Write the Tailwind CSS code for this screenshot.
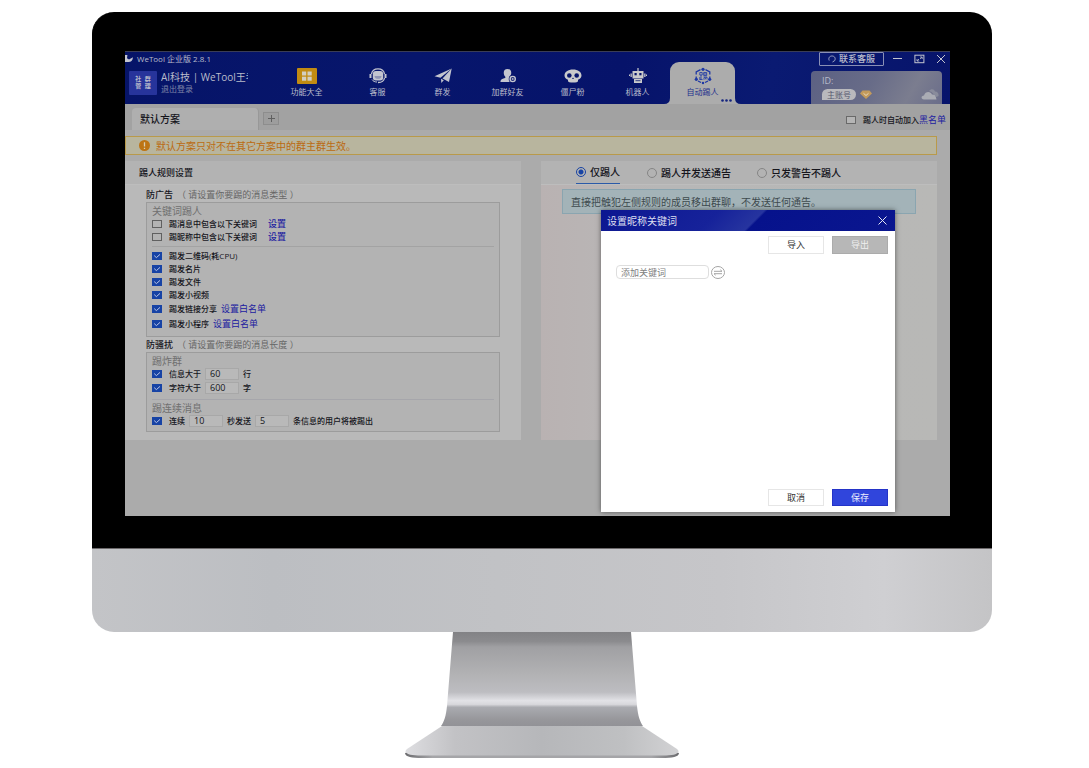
<!DOCTYPE html>
<html lang="zh-CN">
<head>
<meta charset="utf-8">
<meta name="viewport" content="width=device-width, initial-scale=1">
<title>WeTool 企业版</title>
<script src="https://cdn.jsdelivr.net/npm/@tailwindcss/browser@4"></script>
</head>
<body class="bg-white pt-3 pl-[92px] pr-[97px] font-['Open_Sans','Noto_Sans_CJK_SC',sans-serif] text-[8px] leading-3 text-[#15151c]">
<svg class="hidden" aria-hidden="true">
  <symbol id="tick" viewBox="0 0 10 8"><path d="M2.2 3.6 4.4 5.6 8 2.4" fill="none" stroke="#b9c4e6" stroke-width="1"/></symbol>
</svg>

<div class="rounded-t-[22px] bg-black pt-[39px] pr-[42px] pb-8 pl-8 border-l border-black">
  <div class="relative overflow-hidden bg-[#ababab]">

    <header class="flex h-[53px] border-t border-[#3a3d55] bg-[linear-gradient(100deg,#061468_0%,#07166c_35%,#06136a_60%,#0a1a72_78%,#07146b_100%)] text-[#b9bccb]">
      <div class="w-[149px] shrink-0">
        <div class="flex h-[14px] items-center gap-1">
          <svg class="h-2 w-2" viewBox="0 0 8 8"><path d="M0 0h2.4L2 3.2l2 1.3L8 2.2C7.600 5.500 6 7 3.500 7H0Z" fill="#c4c6d2"/></svg>
          <h1>WeTool 企业版 2.8.1</h1>
        </div>
        <div class="mt-[5px] flex gap-1 pl-1">
          <div class="grid h-6 w-7 grid-cols-2 place-content-center justify-items-center gap-x-px rounded-[1px] bg-[#27349b] px-[5px] text-[6px] leading-[7px] font-bold"><span>社</span><span>群</span><span>管</span><span>理</span></div>
          <div>
            <p class="w-[87px] overflow-hidden text-[10px] leading-3 whitespace-nowrap">AI科技 | WeTool王者</p>
            <a href="#" class="block text-[#7f85a8]">退出登录</a>
          </div>
        </div>
      </div>

      <nav class="flex shrink-0 items-end text-center">
        <a href="#" class="mr-[6px] flex h-[42px] w-[65px] flex-col items-center pt-[5px]">
          <svg class="h-[18px] w-5" viewBox="0 0 20 18"><rect y="1" width="20" height="16" rx="1" fill="#c18b12"/><g fill="#d3cfc0"><rect x="5" y="4.500" width="4.200" height="4"/><rect x="10.500" y="4.500" width="4.200" height="4"/><rect x="5" y="9.700" width="4.200" height="4"/><rect x="10.500" y="9.700" width="4.200" height="4"/></g></svg>
          <span class="mt-px">功能大全</span></a>
        <a href="#" class="flex h-[42px] w-[65px] flex-col items-center pt-[5px]">
          <svg class="h-[18px] w-[18px]" viewBox="0 0 18 18" fill="none" stroke="#c3c5cf"><path d="M2.500 7C3 3.500 5.500 1.800 9 1.800S15 3.500 15.500 7" stroke-width="1.300"/><rect x="3.800" y="4" width="10.400" height="9.500" rx="3" fill="#c3c5cf" stroke="none"/><path d="M5.500 9h7c0 3.800-7 3.800-7 0Z" fill="#8f94b4" stroke="none"/><path d="M1.500 7v4M16.500 7v4" stroke-width="2"/><path d="M15.500 11c-.5 3-3 4.500-6.500 4.500" stroke-width="1.300"/><path d="M3 12.500c1 1.800 3 2.500 5 2.500" stroke-width="1"/></svg>
          <span class="mt-px">客服</span></a>
        <a href="#" class="flex h-[42px] w-[65px] flex-col items-center pt-[5px]">
          <svg class="h-[18px] w-[18px]" viewBox="0 0 18 18" fill="#c3c5cf"><path d="M.5 9.200 17.700 1.500 6.500 10.800Z"/><path d="M17.700 1.500 15 15 8.500 11.500Z"/><path d="M7 11.700 9.800 13.200 7.300 16Z"/></svg>
          <span class="mt-px">群发</span></a>
        <a href="#" class="flex h-[42px] w-[65px] flex-col items-center pt-[5px]">
          <svg class="h-[18px] w-[18px]" viewBox="0 0 18 18"><path d="M8.500 2c3 0 4 2 3.700 4.500-.2 1.500-.8 2.500-1.500 3.200v1.500L13 13v2H1.500c0-2.500 1-3 4.800-4V9.700C5.500 9 5 8 4.800 6.500 4.500 4 5.500 2 8.500 2Z" fill="#c3c5cf"/><circle cx="13.700" cy="12" r="4" fill="#07156b"/><circle cx="13.700" cy="12" r="2.600" fill="none" stroke="#c3c5cf" stroke-width="1.400"/><path d="M12.500 12h2.400M13.700 10.800v2.400" stroke="#c3c5cf" stroke-width=".8"/></svg>
          <span class="mt-px">加群好友</span></a>
        <a href="#" class="flex h-[42px] w-[65px] flex-col items-center pt-[5px]">
          <svg class="h-[18px] w-[18px]" viewBox="0 0 18 18"><path d="M9 2.500c5 0 8.500 2.500 8.500 6 0 2-1.200 3.200-3.500 4.200V14c0 1.300-2 1.500-5 1.500S4 15.300 4 14v-1.300C1.700 11.700.5 10.500.5 8.500c0-3.500 3.500-6 8.500-6Z" fill="#c9cacb"/><circle cx="5.300" cy="8.500" r="2.300" fill="#07156b"/><circle cx="12.700" cy="8.500" r="2.300" fill="#07156b"/><path d="M9 10.500 10 12H8Z" fill="#07156b"/></svg>
          <span class="mt-px">僵尸粉</span></a>
        <a href="#" class="flex h-[42px] w-[65px] flex-col items-center pt-[5px]">
          <svg class="h-[18px] w-[18px]" viewBox="0 0 18 18"><path d="M8.400 1h1.200v3H8.400ZM3.500 4h11v7.500h-11ZM1.500 6.500h1.300v3.500H1.500ZM15.200 6.500h1.300v3.500h-1.300ZM0 7.500h1v1.500H0ZM17 7.500h1v1.500h-1ZM5 12h8V16H5Z" fill="#c9cacb"/><rect x="5.500" y="6" width="2.200" height="2.300" fill="#07156b"/><rect x="10.300" y="6" width="2.200" height="2.300" fill="#07156b"/><path d="M6.500 13.700h5" stroke="#07156b" stroke-width=".8"/></svg>
          <span class="mt-px">机器人</span></a>
        <a href="#" aria-current="page" class="relative flex h-[42px] w-[65px] flex-col items-center rounded-t-[9px] bg-[#acacac] pt-[5px] text-[#1c2f8c]">
          <svg class="absolute bottom-0 -left-[6px] h-[6px] w-[6px]" viewBox="0 0 6 6"><path d="M6 0v6H0Q6 6 6 0Z" fill="#acacac"/></svg>
          <svg class="absolute -right-[6px] bottom-0 h-[6px] w-[6px]" viewBox="0 0 6 6"><path d="M0 0v6h6Q0 6 0 0Z" fill="#acacac"/></svg>
          <svg class="h-[18px] w-[18px]" viewBox="0 0 18 18" fill="none" stroke="#1d37a5"><path d="M6.500 2.700 2.200 4.800v2.700M11.500 2.700l4.300 2.100v2.700M4 14l3 1.500M14 14l-3 1.500M2.200 9.500V11M15.800 9.500V11" stroke-width="1.300"/><g fill="#1d37a5" stroke="none"><circle cx="9" cy="2.300" r="1.600"/><circle cx="2.300" cy="12.300" r="1.600"/><circle cx="15.700" cy="12.300" r="1.600"/><circle cx="9" cy="16" r="1.200"/></g><path d="M5.800 5.500h2.400v2.500H5.800ZM7 8v4.500M5.500 12.500h3M5.800 10v2.500M9.700 5.500h3v3h-3ZM9.700 7h3M9.500 10h3.500v2.500M11 10l-1.700 2.500M12.300 10l-1.500 2.700" stroke-width=".8"/></svg>
          <span class="mt-px">自动踢人</span>
          <svg class="absolute right-[3px] bottom-[2px] h-[3px] w-[11px]" viewBox="0 0 11 3" fill="#14247f"><circle cx="1.500" cy="1.500" r="1.300"/><circle cx="5.500" cy="1.500" r="1.300"/><circle cx="9.500" cy="1.500" r="1.300"/></svg>
        </a>
      </nav>

      <div class="flex min-w-0 flex-1 flex-col items-end justify-between">
        <div class="flex items-center pr-1">
          <button class="flex h-[14px] w-[65px] items-center justify-center gap-[3px] rounded-[1px] border border-[#8a90b5] text-[9px] font-medium">
            <svg class="h-2 w-2" viewBox="0 0 8 8" fill="none" stroke="#9fa5c4"><path d="M1.200 5.500C0 2.500 2 1 4 1s4 1.500 2.800 4.500M6.800 5.500 4.500 7" stroke-width="1"/></svg>联系客服</button>
          <button aria-label="最小化" class="ml-2"><svg class="h-[10px] w-[11px]" viewBox="0 0 11 10"><path d="M1 4.500h9" stroke="#c3c5cf"/></svg></button>
          <button aria-label="最大化" class="ml-[11px]"><svg class="h-[10px] w-[11px]" viewBox="0 0 11 10" fill="none" stroke="#c3c5cf"><rect x=".9" y="1.200" width="9" height="7.500"/><path d="M6 3h2.200v2M8 3.200 6 5M3 5v2h2.200M3.200 6.800 5 5" stroke-width=".8"/></svg></button>
          <button aria-label="关闭" class="ml-[11px]"><svg class="h-[10px] w-[10px]" viewBox="0 0 10 10"><path d="M1 1l8 8M9 1 1 9" stroke="#c3c5cf"/></svg></button>
        </div>
        <div class="mr-2 h-[33px] w-[131px] rounded-t-sm bg-[linear-gradient(120deg,#5c6183_0%,#686c88_45%,#7b7d8f_75%,#6a6d8a_100%)] px-[11px] pt-1 text-[9px]">
          <p>ID:</p>
          <div class="flex items-center pt-[2px]">
            <span class="rounded-full rounded-bl-none bg-[#b9b9bd] px-[5px] text-[8px] leading-[11px] text-[#55586e]">主账号</span>
            <svg class="ml-1 h-[9px] w-3" viewBox="0 0 12 9"><path d="M2.500.5h7L12 3.500 6 9 0 3.500Z" fill="#c39a5b"/><path d="M3.500 3.300 6 5.500 8.500 3.300" fill="none" stroke="#e8d9be"/></svg>
            <svg class="-mr-2 ml-auto h-[11px] w-[18px]" viewBox="0 0 18 11"><path d="M8 2c2-2.500 5-2.200 6 .5 3 0 3.800 2.500 3.500 4.500l-2 1-5-5Z" fill="#898c9c"/><path d="M3 10.500C-.5 10.500 0 6.500 3 6.500 4 2 10 2 11 5.500c3 0 3.800 1.300 4.500 5Z" fill="#aaacb4"/></svg>
          </div>
        </div>
      </div>
    </header>

    <main class="pb-[76px]">
      <div class="flex h-[26px] items-end bg-[#a2a2a2] pl-[7px]">
        <button class="h-[22px] w-[127px] rounded-t-sm border-r border-[#989898] bg-[#afafaf] pl-2 text-left text-[10px] font-medium">默认方案</button>
        <button aria-label="新增方案" class="mb-[5px] ml-1 flex h-[13px] w-4 items-center justify-center border border-[#8d8d8d] bg-[#9d9d9d]"><svg class="h-[7px] w-[7px]" viewBox="0 0 7 7"><path d="M0 3.500h7M3.500 0v7" stroke="#606060"/></svg></button>
        <label class="mb-1 ml-auto flex items-center font-medium"><input type="checkbox" class="mr-[7px] h-2 w-[10px] appearance-none border border-[#696969] bg-[#b5b5b5]">踢人时自动加入</label>
        <a href="#" class="mr-1 mb-1 text-[9px] text-[#2020a0]">黑名单</a>
      </div>

      <div class="mt-[6px] mr-[13px] flex h-[19px] items-center gap-[6px] border border-[#b99a4a] bg-[#b8b59e] pl-[13px] text-[10px] text-[#bb6a10]">
        <svg class="h-[11px] w-[11px]" viewBox="0 0 11 11"><circle cx="5.500" cy="5.500" r="5.500" fill="#bd7414"/><path d="M5.500 2.200v4.300M5.500 7.700v1.300" stroke="#d8cdb4" stroke-width="1.300"/></svg>
        默认方案只对不在其它方案中的群主群生效。
      </div>

      <div class="mt-[6px] mr-[13px] grid grid-cols-2 gap-5">
        <section class="bg-[#b9b9b9] pb-2">
          <h2 class="flex h-6 items-center border-b border-[#bdbdbd] bg-[#b3b3b3] pl-[14px] text-[9px] font-medium">踢人规则设置</h2>
          <div class="px-[21px] pt-1">
            <h3 class="h-3 text-[9px] font-medium">防广告<span class="pl-1 font-normal text-[#666]">（ 请设置你要踢的消息类型 ）</span></h3>
            <div class="mt-px border border-[#9c9c9c] bg-[#b3b3b3] px-[5px] pt-[2px] pb-[5px] font-medium">
              <p class="h-3 text-[10px] font-normal text-[#707070]">关键词踢人</p>
              <div class="flex h-[13px] items-center"><label class="flex items-center gap-[7px]"><input type="checkbox" class="h-2 w-[10px] appearance-none border border-[#606060]">踢消息中包含以下关键词</label><a href="#" class="ml-[11px] text-[9px] text-[#2020a0]">设置</a></div>
              <div class="flex h-[13px] items-center"><label class="flex items-center gap-[7px]"><input type="checkbox" class="h-2 w-[10px] appearance-none border border-[#606060]">踢昵称中包含以下关键词</label><a href="#" class="ml-[11px] text-[9px] text-[#2020a0]">设置</a></div>
              <hr class="mt-[3px] mb-[2px] border-[#a3a3a3]">
              <label class="flex h-[13px] items-center"><span class="mr-[7px] grid"><input type="checkbox" checked class="col-start-1 row-start-1 h-2 w-[10px] appearance-none bg-[#1743a5]"><svg class="col-start-1 row-start-1 h-2 w-[10px]"><use href="#tick"/></svg></span>踢发二维码(耗CPU)</label>
              <label class="flex h-[13px] items-center"><span class="mr-[7px] grid"><input type="checkbox" checked class="col-start-1 row-start-1 h-2 w-[10px] appearance-none bg-[#1743a5]"><svg class="col-start-1 row-start-1 h-2 w-[10px]"><use href="#tick"/></svg></span>踢发名片</label>
              <label class="flex h-[13px] items-center"><span class="mr-[7px] grid"><input type="checkbox" checked class="col-start-1 row-start-1 h-2 w-[10px] appearance-none bg-[#1743a5]"><svg class="col-start-1 row-start-1 h-2 w-[10px]"><use href="#tick"/></svg></span>踢发文件</label>
              <label class="flex h-[13px] items-center"><span class="mr-[7px] grid"><input type="checkbox" checked class="col-start-1 row-start-1 h-2 w-[10px] appearance-none bg-[#1743a5]"><svg class="col-start-1 row-start-1 h-2 w-[10px]"><use href="#tick"/></svg></span>踢发小视频</label>
              <div class="flex h-[15px] items-center"><label class="flex items-center"><span class="mr-[7px] grid"><input type="checkbox" checked class="col-start-1 row-start-1 h-2 w-[10px] appearance-none bg-[#1743a5]"><svg class="col-start-1 row-start-1 h-2 w-[10px]"><use href="#tick"/></svg></span>踢发链接分享</label><a href="#" class="ml-1 text-[9px] font-normal text-[#2020a0]">设置白名单</a></div>
              <div class="flex h-[15px] items-center"><label class="flex items-center"><span class="mr-[7px] grid"><input type="checkbox" checked class="col-start-1 row-start-1 h-2 w-[10px] appearance-none bg-[#1743a5]"><svg class="col-start-1 row-start-1 h-2 w-[10px]"><use href="#tick"/></svg></span>踢发小程序</label><a href="#" class="ml-1 text-[9px] font-normal text-[#2020a0]">设置白名单</a></div>
            </div>
            <h3 class="mt-[2px] h-3 text-[9px] font-medium">防骚扰<span class="pl-1 font-normal text-[#666]">（ 请设置你要踢的消息长度 ）</span></h3>
            <div class="mt-px border border-[#9c9c9c] bg-[#b3b3b3] px-[5px] pt-[2px] pb-[3px] font-medium">
              <p class="h-3 text-[10px] font-normal text-[#707070]">踢炸群</p>
              <div class="flex h-[14px] items-center"><label class="flex items-center"><span class="mr-[7px] grid"><input type="checkbox" checked class="col-start-1 row-start-1 h-2 w-[10px] appearance-none bg-[#1743a5]"><svg class="col-start-1 row-start-1 h-2 w-[10px]"><use href="#tick"/></svg></span>信息大于</label><input aria-label="信息行数" value="60" class="mr-1 ml-1 h-3 w-[34px] border border-[#a8a8a8] bg-[#b9b9b9] pl-1 text-[9px]">行</div>
              <div class="flex h-[14px] items-center"><label class="flex items-center"><span class="mr-[7px] grid"><input type="checkbox" checked class="col-start-1 row-start-1 h-2 w-[10px] appearance-none bg-[#1743a5]"><svg class="col-start-1 row-start-1 h-2 w-[10px]"><use href="#tick"/></svg></span>字符大于</label><input aria-label="字符字数" value="600" class="mr-1 ml-1 h-3 w-[34px] border border-[#a8a8a8] bg-[#b9b9b9] pl-1 text-[9px]">字</div>
              <hr class="mt-1 mb-[2px] border-[#a6a6ab]">
              <p class="h-3 text-[10px] font-normal text-[#707070]">踢连续消息</p>
              <div class="flex h-[14px] items-center"><label class="flex items-center"><span class="mr-[7px] grid"><input type="checkbox" checked class="col-start-1 row-start-1 h-2 w-[10px] appearance-none bg-[#1743a5]"><svg class="col-start-1 row-start-1 h-2 w-[10px]"><use href="#tick"/></svg></span>连续</label><input aria-label="连续秒数" value="10" class="mr-1 ml-1 h-3 w-[34px] border border-[#a8a8a8] bg-[#b9b9b9] pl-1 text-[9px]">秒发送<input aria-label="消息条数" value="5" class="mr-1 ml-1 h-3 w-[34px] border border-[#a8a8a8] bg-[#b9b9b9] pl-1 text-[9px]">条信息的用户将被踢出</div>
            </div>
          </div>
        </section>

        <section class="bg-[linear-gradient(90deg,#b9b2b2_0%,#b9b5b5_15%,#b7b7b7_30%,#b8b8b6_100%)]">
          <div class="flex h-6 items-stretch border-b border-[#bdbdbd] bg-[#b3b3b3] pl-[35px] text-[10px] font-medium">
            <label class="flex items-center gap-1 border-b border-[#2b5aa8]"><input type="radio" name="mode" checked class="h-[10px] w-[10px] appearance-none rounded-full border border-[#1743a5] bg-[radial-gradient(circle,#1743a5_2px,transparent_3px)]">仅踢人</label>
            <label class="ml-[27px] flex items-center gap-1"><input type="radio" name="mode" class="h-[10px] w-[10px] appearance-none rounded-full border border-[#858585]">踢人并发送通告</label>
            <label class="ml-[26px] flex items-center gap-1"><input type="radio" name="mode" class="h-[10px] w-[10px] appearance-none rounded-full border border-[#858585]">只发警告不踢人</label>
          </div>
          <p class="mt-1 mr-[21px] ml-[21px] flex h-[25px] items-center border border-[#8aa5b0] bg-[#a3b3b8] pl-2 text-[10px] text-[#3e4a4e]">直接把触犯左侧规则的成员移出群聊，不发送任何通告。</p>
        </section>
      </div>
    </main>

    <div role="dialog" aria-labelledby="dlg" class="absolute right-[55px] bottom-1 flex h-[302px] w-[294px] flex-col bg-white text-[9px] shadow-[0_0_5px_rgba(0,0,0,0.5)]">
      <div class="flex h-[21px] items-center justify-between bg-[linear-gradient(135deg,#0c1791_0%,#16229a_38%,#26349f_52%,#06128c_53%,#0a168f_100%)] pr-2 pl-[6px] text-[#dcdff0]">
        <h2 id="dlg" class="text-[10px]">设置昵称关键词</h2>
        <button aria-label="关闭对话框"><svg class="h-[9px] w-[9px]" viewBox="0 0 9 9"><path d="M.5.5l8 8M8.500.5l-8 8" stroke="#e6e8f4"/></svg></button>
      </div>
      <div class="flex justify-end gap-2 pt-[5px] pr-[7px]">
        <button class="h-[18px] w-14 border border-[#e6e6e6] text-[#333]">导入</button>
        <button class="h-[18px] w-14 border border-[#ababab] bg-[#b7b7b7] text-[#efefef]">导出</button>
      </div>
      <div class="flex items-center gap-[2px] pt-[11px] pl-[15px]">
        <input aria-label="添加关键词" placeholder="添加关键词" class="h-[14px] w-[93px] rounded-sm border border-[#dedede] pl-1 placeholder:text-[#808080]">
        <button aria-label="切换"><svg class="h-[13px] w-[14px]" viewBox="0 0 14 13" fill="none" stroke="#a5a5a5"><ellipse cx="7" cy="6.500" rx="6.500" ry="6"/><path d="M3 5.300h8L9.300 3.800M11 7.700H3l1.700 1.500"/></svg></button>
      </div>
      <div class="mt-auto flex justify-end gap-2 pr-[7px] pb-[6px]">
        <button class="h-[17px] w-14 border border-[#e6e6e6] text-[#333]">取消</button>
        <button class="h-[17px] w-14 border border-[#2434c8] bg-[#3045dc] text-[#eceefe]">保存</button>
      </div>
    </div>
  </div>
</div>

<div class="h-[84px] rounded-b-[22px] border-t border-[#6d6a6c] bg-[linear-gradient(90deg,#c3c4c7_0%,#bcbec2_20%,#c1c2c5_45%,#c6c6c9_70%,#cfcfd2_88%,#c4c4c6_100%)]"></div>

<svg class="mx-auto block h-[127px] w-[276px]" viewBox="0 0 276 127" aria-hidden="true">
  <defs>
    <linearGradient id="neck" x1="0" y1="0" x2="0" y2="1">
      <stop offset="0" stop-color="#828285"/><stop offset=".1" stop-color="#8b8b8e"/><stop offset=".16" stop-color="#a0a0a3"/><stop offset=".45" stop-color="#b2b2b4"/><stop offset=".64" stop-color="#bdbdc1"/><stop offset=".73" stop-color="#e2e2e6"/><stop offset=".77" stop-color="#d8d8dc"/><stop offset=".8" stop-color="#aaabb0"/><stop offset=".93" stop-color="#97979b"/><stop offset="1" stop-color="#929297"/>
    </linearGradient>
    <linearGradient id="foot" x1="0" y1="0" x2="1" y2="0">
      <stop offset="0" stop-color="#dedee1"/><stop offset=".18" stop-color="#c2c2c5"/><stop offset=".5" stop-color="#b6b7ba"/><stop offset=".8" stop-color="#bfc0c2"/><stop offset="1" stop-color="#d2d2d4"/>
    </linearGradient>
    <linearGradient id="edge" x1="0" y1="0" x2="1" y2="0">
      <stop offset="0" stop-color="#6b6b6e"/><stop offset=".1" stop-color="#a5a5a8"/><stop offset=".9" stop-color="#a5a5a8"/><stop offset="1" stop-color="#6b6b6e"/>
    </linearGradient>
  </defs>
  <path d="M1 121C1 125 8 126 18 126H258C268 126 275 125 275 121L262 118H14Z" fill="url(#edge)"/>
  <path d="M38 94 3 117C-1 120 3 123.500 14 123.500H262C273 123.500 277 120 273 117L238 94Z" fill="url(#foot)"/>
  <path d="M49 0H227L233 74C234 84 236 90 239 94H37C40 90 42 84 43 74Z" fill="url(#neck)"/>
</svg>
</body>
</html>
